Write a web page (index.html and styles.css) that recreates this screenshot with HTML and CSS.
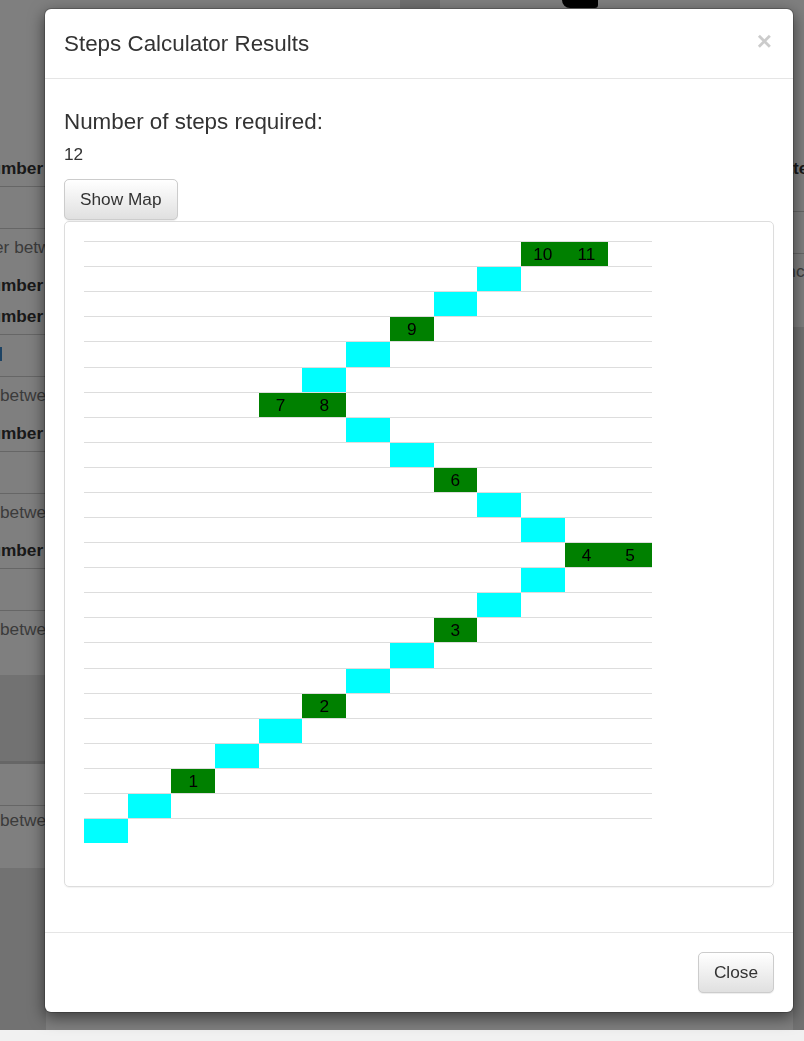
FILE: index.html
```html
<!DOCTYPE html>
<html>
<head>
<meta charset="utf-8">
<title>Steps Calculator Results</title>
<link rel="stylesheet" href="styles.css">
</head>
<body>
<div class="page">
  <div class="bg-top">
    <div class="bg-band"></div>
    <div class="bg-figure"></div>
  </div>
  <div class="bg-cols">
    <div class="bg-left">
      <div class="bg-gap"></div>
      <div class="bg-row bg-head"><span class="b">Number of</span></div>
      <div class="bg-row bg-empty"></div>
      <div class="bg-row bg-block1">
        <div class="muted w">Number between</div>
        <div class="b l2">Number of</div>
        <div class="b l3">Number</div>
      </div>
      <div class="bg-row bg-empty"><span class="blue-bar"></span></div>
      <div class="bg-row bg-block2">
        <div class="muted s">between</div>
        <div class="b l2">Number :</div>
      </div>
      <div class="bg-row bg-empty"></div>
      <div class="bg-row bg-block2">
        <div class="muted s">between</div>
        <div class="b l2">Number :</div>
      </div>
      <div class="bg-row bg-empty"></div>
      <div class="bg-plain"><div class="muted s">between</div></div>
      <div class="bg-dark"></div>
      <div class="bg-row bg-empty"></div>
      <div class="bg-plain2"><div class="muted s">between</div></div>
      <div class="bg-dark2"></div>
    </div>
    <div class="bg-mid"></div>
    <div class="bg-right">
      <div class="bg-gap"></div>
      <div class="bg-rhead"><span class="b">Rate</span></div>
      <div class="bg-rrow"></div>
      <div class="bg-rrow2"><span class="muted">Since</span></div>
      <div class="bg-rdark"></div>
    </div>
  </div>
</div>
<div class="bottom-strip"></div>
<div class="backdrop"></div>

<div class="modal">
  <div class="modal-header">
    <h4 class="modal-title">Steps Calculator Results</h4>
    <span class="close">&times;</span>
  </div>
  <div class="modal-body">
    <h4 class="steps-title">Number of steps required:</h4>
    <div class="steps-count">12</div>
    <button class="btn">Show Map</button>
    <div class="panel">
      <div class="map">
        <div class="row"><div class="c g c10">10</div><div class="c g c11">11</div></div>
        <div class="row"><div class="c y c9"></div></div>
        <div class="row"><div class="c y c8"></div></div>
        <div class="row"><div class="c g c7">9</div></div>
        <div class="row"><div class="c y c6"></div></div>
        <div class="row"><div class="c y c5"></div></div>
        <div class="row"><div class="c g c4">7</div><div class="c g c5">8</div></div>
        <div class="row"><div class="c y c6"></div></div>
        <div class="row"><div class="c y c7"></div></div>
        <div class="row"><div class="c g c8">6</div></div>
        <div class="row"><div class="c y c9"></div></div>
        <div class="row"><div class="c y c10"></div></div>
        <div class="row"><div class="c g c11">4</div><div class="c g c12">5</div></div>
        <div class="row"><div class="c y c10"></div></div>
        <div class="row"><div class="c y c9"></div></div>
        <div class="row"><div class="c g c8">3</div></div>
        <div class="row"><div class="c y c7"></div></div>
        <div class="row"><div class="c y c6"></div></div>
        <div class="row"><div class="c g c5">2</div></div>
        <div class="row"><div class="c y c4"></div></div>
        <div class="row"><div class="c y c3"></div></div>
        <div class="row"><div class="c g c2">1</div></div>
        <div class="row"><div class="c y c1"></div></div>
        <div class="row"><div class="c y c0"></div></div>
      </div>
    </div>
  </div>
  <div class="modal-footer">
    <button class="btn">Close</button>
  </div>
</div>
</body>
</html>
```

FILE: styles.css
```css
html { background: #f1f1f1; }
body {
  margin: 0;
  font-family: "Liberation Sans", Arial, sans-serif;
  color: #333;
  font-size: 17.25px;
  overflow: hidden;
}

/* ---------- background page (under the backdrop) ---------- */
.page {
  height: 1030px;
  background: #fff;
  overflow: hidden;
  position: relative;
}
.bg-top {
  height: 0;
}
.bg-band {
  position: absolute;
  left: 400px; top: 0;
  width: 40px; height: 8px;
  background: #e2e2e2;
}
.bg-figure {
  position: absolute;
  left: 562px; top: 0;
  width: 36px; height: 8px;
  background: #000;
  border-radius: 0 0 4px 10px;
}
.bg-cols {
  display: flex;
  height: 1030px;
}
.bg-left {
  width: 46px;
  overflow: hidden;
  flex: none;
}
.bg-left > div > span,
.bg-left > div > div {
  margin-left: -22px;
  white-space: nowrap;
}
.bg-mid { flex: 1; }
.bg-right {
  width: 11px;
  overflow: hidden;
  flex: none;
}
.bg-gap { height: 150px; }
.b { font-weight: bold; color: #333; }
.muted { color: #777; }
.bg-left > div > .s { margin-left: 0; }
.bg-left > div > .w { margin-left: -52px; }
.bg-row { border-bottom: 1px solid #ccc; }
.bg-head { height: 36px; line-height: 36px; }
.bg-empty { height: 41px; position: relative; }
.bg-block1 {
  height: 106px;
  padding-top: 8px;
  line-height: 20px;
  box-sizing: border-box;
}
.bg-block1 .l2 { margin-top: 18px; }
.bg-block1 .l3 { margin-top: 11px; }
.bg-block2 {
  height: 75px;
  padding-top: 8px;
  line-height: 20px;
  box-sizing: border-box;
}
.bg-block2 .l2 { margin-top: 18px; }
.blue-bar {
  position: absolute;
  left: 22px; top: 12px;
  width: 2px; height: 14px;
  background: #3a87c8;
}
.bg-plain {
  height: 64px;
  padding-top: 8px;
  line-height: 20px;
  box-sizing: border-box;
}
.bg-dark {
  height: 86px;
  background: #e5e5e5;
  border-bottom: 3px solid #ccc;
}
.bg-plain2 {
  height: 62px;
  padding-top: 4px;
  line-height: 20px;
  box-sizing: border-box;
}
.bg-dark2 {
  height: 200px;
  background: #e5e5e5;
}
.bg-right span { margin-left: -22px; white-space: nowrap; }
.bg-rhead { height: 61px; line-height: 36px; border-bottom: 1px solid #ccc; }
.bg-rrow { height: 41px; border-bottom: 1px solid #ccc; }
.bg-rrow2 { height: 73px; line-height: 34px; }
.bg-rdark { height: 720px; background: #e5e5e5; }

.bottom-strip { height: 11px; background: #f1f1f1; }

.backdrop {
  position: fixed;
  left: 0; top: 0; right: 0;
  height: 1030px;
  background: rgba(0, 0, 0, 0.5);
}

/* ---------- modal ---------- */
.modal {
  position: absolute;
  left: 44px;
  top: 8px;
  width: 750px;
  box-sizing: border-box;
  background: #fff;
  border: 1px solid rgba(0, 0, 0, 0.2);
  border-radius: 7px;
  box-shadow: 0 5px 15px rgba(0, 0, 0, 0.5);
  background-clip: padding-box;
}
.modal-header {
  display: flex;
  justify-content: space-between;
  align-items: flex-start;
  padding: 18.5px 19px 18.5px 19px;
  border-bottom: 1px solid #e5e5e5;
}
.modal-title {
  margin: 0;
  font-size: 22.4px;
  font-weight: normal;
  line-height: 31.7px;
  color: #333;
}
.close {
  font-size: 26px;
  font-weight: bold;
  line-height: 1;
  color: #000;
  opacity: 0.2;
  margin-top: 0;
  margin-right: 2px;
}
.modal-body {
  padding: 18.5px 19px 45px 19px;
}
.steps-title {
  margin: 12.3px 0 8px;
  font-size: 22.4px;
  font-weight: normal;
  line-height: 24.4px;
  color: #333;
}
.steps-count {
  line-height: 24.6px;
  margin-bottom: 12.3px;
}
.btn {
  display: inline-block;
  font-family: "Liberation Sans", Arial, sans-serif;
  font-size: 17.25px;
  line-height: 24.6px;
  padding: 7.4px 15px;
  color: #333;
  border: 1px solid #ccc;
  border-radius: 5px;
  background-color: #e0e0e0;
  background-image: linear-gradient(to bottom, #fff 0, #e0e0e0 100%);
  box-shadow: inset 0 1px 0 rgba(255, 255, 255, 0.15), 0 1px 1px rgba(0, 0, 0, 0.075);
}
.panel {
  margin-top: 1px;
  border: 1px solid #ddd;
  border-radius: 5px;
  padding: 19px 19px 43px;
  box-shadow: 0 1px 1px rgba(0, 0, 0, 0.05);
}
.map {
  width: 568px;
}
.row {
  display: grid;
  grid-template-columns: repeat(13, 1fr);
  height: 25.08px;
  box-sizing: border-box;
  border-top: 1px solid #ddd;
}
.c {
  grid-row: 1;
  text-align: center;
  line-height: 24px;
  color: #000;
  font-size: 17.25px;
}
.g { background: #008000; }
.y { background: #00ffff; }
.c0 { grid-column: 1; }
.c1 { grid-column: 2; }
.c2 { grid-column: 3; }
.c3 { grid-column: 4; }
.c4 { grid-column: 5; }
.c5 { grid-column: 6; }
.c6 { grid-column: 7; }
.c7 { grid-column: 8; }
.c8 { grid-column: 9; }
.c9 { grid-column: 10; }
.c10 { grid-column: 11; }
.c11 { grid-column: 12; }
.c12 { grid-column: 13; }
.modal-footer {
  display: flex;
  justify-content: flex-end;
  padding: 19px 19px 19px;
  border-top: 1px solid #e5e5e5;
}
```
